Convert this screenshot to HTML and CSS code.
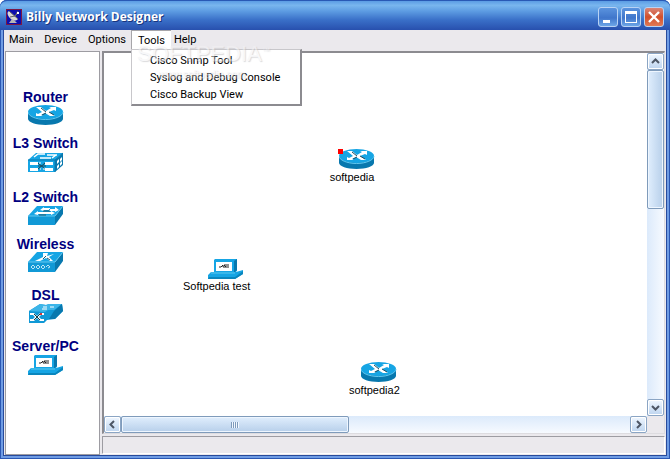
FILE: index.html
```html
<!DOCTYPE html>
<html lang="en">
<head>
    <meta charset="UTF-8">
    <meta name="viewport" content="width=device-width, initial-scale=1.0">
    <title>Billy Network Designer</title>
    <link rel="stylesheet" href="styles.css">
</head>
<body>

    <!-- device icons, used by the toolbox and the canvas -->
    <svg class="symbols" aria-hidden="true">
        <symbol id="router" viewBox="0 0 36 22">
            <path d="M0 7v7c0 3 8 6 17.500 6s17.500-3 17.500-6V7z" fill="#0878ae"/>
            <ellipse cx="17.500" cy="7" rx="17.500" ry="7" fill="#16a5e4"/>
            <path d="M0 7c0 4 8 7.500 17.500 7.500S35 11 35 7" fill="none" stroke="#62c8f0"/>
            <path d="M8 2h5l5 4 5-3-2-1h7v4l-2-1-5 2 6 4h-5l-5-3-4 2 2 1H8V8l2 1 4-2z" fill="#fff"/>
            <path d="M13 3l5 4M18 8l-4 2M21 7l5 3" stroke="#254d5d" fill="none"/>
        </symbol>
        <symbol id="l3switch" viewBox="0 0 36 22">
            <path d="M0 9l8-7h27l-8 7z" fill="#16a5e4"/>
            <path d="M27 9l8-7v12l-8 7z" fill="#0878ae"/>
            <path d="M0 9h27v12H0z" fill="#16a5e4"/>
            <path d="M0 9h27l8-7M27 9v12" stroke="#0878ae" fill="none"/>
            <path d="M6 6l4-3h7M19 4h10M12 7h11M24 7l4-3" stroke="#fff" stroke-width="1.500" fill="none"/>
            <path d="M2 11h8v3H2zM17 11h8v3h-8zM2 17h8v3H2zM17 17h8v3h-8zM29 10l2-2v3l-2 2zM32 8l2-2v3l-2 2zM29 15l2-2v3l-2 2zM32 12l2-2v3l-2 2z" fill="#fff"/>
            <path d="M10 12l7 6M17 12l-7 6M10 15h8" stroke="#174858"/>
            <path d="M11 12h2M15 18h2M12 18h1" stroke="#fff"/>
        </symbol>
        <symbol id="l2switch" viewBox="0 0 36 22">
            <path d="M0 11L9 1h26l-8 10z" fill="#16a5e4"/>
            <path d="M27 11l8-10v8l-8 11z" fill="#0878ae"/>
            <path d="M0 11h27v9H0z" fill="#1199d6"/>
            <path d="M0 11h27l8-10" stroke="#62c8f0" fill="none"/>
            <path d="M12 5l4-3v1h6v2h-6v1zM31 5l-4-3v2h-6v2h6v1zM6 9l4-3v1h7v2h-7v1zM27 8l-4-2v1h-6v2h6v1z" fill="#fff"/>
            <path d="M15 6h7M11 10h7" stroke="#245669"/>
        </symbol>
        <symbol id="wireless" viewBox="0 0 36 22">
            <path d="M0 10L9 0h26l-8 10z" fill="#16a5e4"/>
            <path d="M27 10l8-10v9l-8 11z" fill="#0878ae"/>
            <path d="M0 10h27v10H0z" fill="#1199d6"/>
            <path d="M0 10h27l8-10" stroke="#62c8f0" fill="none"/>
            <path d="M15 1l5 0-1 3 7-2-5 3 4 4h-3l-4-3-6 3H7l8-4z" fill="#fff"/>
            <path d="M18 4l-3 3M19 6l3 2" stroke="#245669"/>
            <path d="M3 15l2-2 2 2-2 2zM8 15l2-2 2 2-2 2zM13 15l2-2 2 2-2 2zM18 15l2-2 2 2-2 1" fill="none" stroke="#b9e4f5"/>
        </symbol>
        <symbol id="dsl" viewBox="0 0 36 22">
            <path d="M1 8L12 1l6 1 3-1h13l1 7-8 8-8 1-3 3H1z" fill="#1199d6"/>
            <path d="M1 8L12 1l6 1 3-1h13l-8 6h-6l-3 2z" fill="#3cb5e8"/>
            <path d="M26 8l8-7 1 7-8 8h-6z" fill="#0878ae"/>
            <path d="M15 4h4M22 4h4M14 6h5" stroke="#fff"/>
            <path d="M2 10h4l3 3 3-3h4v2h-3l-2 2 2 2h3v2h-4l-3-3-3 3H2v-2h3l2-2-2-2H2z" fill="#fff"/>
            <path d="M6 11l6 6M12 11l-6 6" stroke="#163d49"/>
            <path d="M12 10h2v2h-2z" fill="#d53838"/>
        </symbol>
        <symbol id="pc" viewBox="0 0 36 22">
            <path d="M6 2l1-1h22v12l-3 2H6z" fill="#16a5e4"/>
            <path d="M26 3l3-2v11l-3 3z" fill="#0878ae"/>
            <path d="M8 4h16v9H8z" fill="#fff"/>
            <path d="M3 14h25l7-2v4l-8 5H0v-4z" fill="#16a5e4"/>
            <path d="M1 19h26l8-6v3l-8 5H0z" fill="#0a86bd"/>
            <path d="M3 15h24" stroke="#5dcaf0"/>
            <path d="M11 9h2l2-2v2h3l-2-2h5M18 9h3" stroke="#222" fill="none"/>
        </symbol>
    </svg>

    <div class="window">
        <header class="titlebar">
            <svg class="app-icon" viewBox="0 0 16 16" aria-hidden="true">
                <path d="M0 0h16v16H0z" fill="#7a1745"/>
                <path d="M1 1h14v14H1z" fill="#0c0cae"/>
                <path d="M3 2l9 8c-3 3-7 1-9-2s-2-5 0-6z" fill="#d8d8d8"/>
                <path d="M3 2l9 8M4 8l5-1 3-5M9 7l4-4" stroke="#686868" fill="none"/>
                <path d="M6 10l-3 4h8l-3-3z" fill="#b6b6b6"/>
                <path d="M11 3h2v2h-2z" fill="#fff"/>
            </svg>
            <h1>Billy Network Designer</h1>
            <button class="win-btn" aria-label="Minimize">
                <svg viewBox="0 0 18 18"><path d="M4 12h7v3H4z" fill="#fff"/></svg>
            </button>
            <button class="win-btn" aria-label="Maximize">
                <svg viewBox="0 0 18 18"><path d="M3 3h12v12H3zM4 6v8h10V6z" fill="#fff" fill-rule="evenodd"/></svg>
            </button>
            <button class="win-btn close" aria-label="Close">
                <svg viewBox="0 0 18 18"><path d="M4 4l10 10M14 4L4 14" stroke="#fff" stroke-width="2.400"/></svg>
            </button>
        </header>

        <nav class="menubar">
            <button>Main</button>
            <button>Device</button>
            <button>Options</button>
            <div class="menu-holder">
                <button class="open" aria-expanded="true">Tools</button>
                <div class="dropdown">
                    <button>Cisco Snmp Tool</button>
                    <button>Syslog and Debug Console</button>
                    <button>Cisco Backup View</button>
                </div>
                <div class="watermark">
                    <span class="mark-name">SOFTPEDIA<sup>™</sup></span>
                    <span class="mark-url">www.softpedia.com</span>
                </div>
            </div>
            <button>Help</button>
        </nav>

        <main class="workspace">
            <aside class="toolbox">
                <button>Router<svg><use href="#router"/></svg></button>
                <button>L3 Switch<svg><use href="#l3switch"/></svg></button>
                <button>L2 Switch<svg><use href="#l2switch"/></svg></button>
                <button>Wireless<svg><use href="#wireless"/></svg></button>
                <button>DSL<svg><use href="#dsl"/></svg></button>
                <button>Server/PC<svg><use href="#pc"/></svg></button>
            </aside>

            <section class="editor">
                <div class="view">
                    <div class="canvas">
                        <div class="node node-router selected"><svg><use href="#router"/></svg>softpedia</div>
                        <div class="node node-pc"><svg><use href="#pc"/></svg>Softpedia test</div>
                        <div class="node node-router2"><svg><use href="#router"/></svg>softpedia2</div>
                    </div>
                    <div class="scroll vertical">
                        <button aria-label="Scroll up"><svg viewBox="0 0 9 9"><path d="M1 6l3.500-3.500L8 6"/></svg></button>
                        <div class="thumb"></div>
                        <div class="track"></div>
                        <button aria-label="Scroll down"><svg viewBox="0 0 9 9"><path d="M1 3l3.500 3.500L8 3"/></svg></button>
                    </div>
                    <div class="scroll horizontal">
                        <button aria-label="Scroll left"><svg viewBox="0 0 9 9"><path d="M6 1L2.500 4.500 6 8"/></svg></button>
                        <div class="thumb"><span class="grip"></span></div>
                        <div class="track"></div>
                        <button aria-label="Scroll right"><svg viewBox="0 0 9 9"><path d="M3 1l3.500 3.500L3 8"/></svg></button>
                    </div>
                </div>
                <footer class="status"></footer>
            </section>
        </main>
    </div>

</body>
</html>
```
FILE: styles.css
```css
* {
    box-sizing: border-box;
}

body {
    margin: 0;
    background: #fff;
    color: #000;
    font-family: "Liberation Sans", Arial, sans-serif;
    font-size: 11px;
}

button {
    margin: 0;
    padding: 0;
    border: 0;
    background: none;
    color: inherit;
    font: inherit;
}

.symbols {
    position: absolute;
    width: 0;
    height: 0;
}

.window {
    display: flex;
    flex-direction: column;
    height: 100vh;
    padding: 0 4px 4px;
    border-radius: 7px 7px 0 0;
    background: #4a7ad0;
    box-shadow: inset 0 0 0 1px #2b58b4, inset 0 0 0 3px #6f9ce4, inset 0 0 0 4px #284b9c;
}

/* title bar */
.titlebar {
    display: flex;
    align-items: center;
    gap: 2px;
    height: 30px;
    margin: 0 -4px;
    padding: 2px 6px 0;
    border-radius: 7px 7px 0 0;
    border-top: 1px solid #2959b5;
    background: linear-gradient(#5b9ce4, #79b6ee 15%, #5d9ce2 35%, #3a70c8 65%, #2850ae);
}

.app-icon {
    width: 16px;
    height: 16px;
    flex: none;
}

.titlebar h1 {
    flex: 1;
    margin: 0 0 0 2px;
    color: #fff;
    font-family: "Open Sans", sans-serif;
    font-size: 12px;
    font-weight: 700;
    text-shadow: 1px 1px 0 #17357e;
}

.win-btn {
    display: flex;
    align-items: center;
    justify-content: center;
    width: 20px;
    height: 20px;
    margin-left: 1px;
    border: 1px solid #b8d2f4;
    border-radius: 3px;
    background: linear-gradient(#5a93de, #4076cb 55%, #6da6e7);
}

.win-btn svg {
    width: 18px;
    height: 18px;
    flex: none;
}

.win-btn.close {
    background: linear-gradient(#d98578, #d14f2b 50%, #e27a55);
}

/* menus */
.menubar {
    display: flex;
    height: 20px;
    padding-left: 5px;
    background: #ebe9ed;
    font-family: Roboto, Tahoma, sans-serif;
}

.menubar > button {
    height: 18px;
    margin-right: 11px;
}

.menu-holder {
    position: relative;
    margin: 0 3px 0 -6px;
}

.menubar .open {
    height: 20px;
    padding: 0 6px;
    border: 1px solid #a7a6aa;
    border-width: 1px 0 0 1px;
    background: #fff;
}

.dropdown {
    position: absolute;
    z-index: 2;
    top: 19px;
    left: 0;
    width: 171px;
    padding: 2px 2px 1px;
    border: 1px solid #c8c7cb;
    border-right: 2px solid #8c8b90;
    border-bottom: 2px solid #8c8b90;
    background: #fff;
}

.dropdown button {
    display: block;
    width: 100%;
    height: 17px;
    padding-left: 16px;
    text-align: left;
    white-space: nowrap;
}

.watermark {
    position: absolute;
    z-index: 3;
    top: 8px;
    left: 6px;
    color: #f3f2f4;
    font-family: "Liberation Sans", Arial, sans-serif;
    text-shadow: 1px 1px 1px #b8b8bc;
    opacity: 0.5;
    pointer-events: none;
}

.mark-name {
    display: block;
    font-size: 22px;
    line-height: 26px;
    white-space: nowrap;
}

.mark-name sup {
    font-size: 8px;
}

.mark-url {
    display: block;
    padding-left: 22px;
    font-size: 10px;
    line-height: 16px;
}

/* toolbox and editor */
.workspace {
    display: flex;
    flex: 1;
    gap: 2px;
    min-height: 0;
    padding: 1px 1px 0;
    background: #ebe9ed;
}

.toolbox {
    display: grid;
    grid-template-rows: 46px 54px 47px 51px 51px auto;
    align-content: start;
    width: 95px;
    flex: none;
    padding-top: 37px;
    padding-right: 14px;
    border: 1px solid #9d9ca2;
    background: #fff;
    color: #000080;
    font-size: 14px;
    font-weight: 700;
}

.toolbox button {
    display: flex;
    flex-direction: column;
    align-items: center;
    line-height: 16px;
    white-space: nowrap;
}

.toolbox svg,
.node svg {
    width: 36px;
    height: 22px;
}

.editor {
    display: flex;
    flex: 1;
    flex-direction: column;
    gap: 2px;
    min-width: 0;
}

.view {
    display: grid;
    flex: 1;
    grid-template-columns: 1fr 17px;
    grid-template-rows: 1fr 17px;
    border: 1px solid #dddce0;
    border-top: 2px solid #8c8b90;
    border-left: 2px solid #8c8b90;
    min-height: 0;
}

.canvas {
    position: relative;
    background: #fff;
}

.node {
    position: absolute;
    display: flex;
    flex-direction: column;
    align-items: center;
    line-height: 13px;
    white-space: nowrap;
}

.node-router {
    left: 225px;
    top: 96px;
}

.node-pc {
    left: 79px;
    top: 205px;
}

.node-router2 {
    left: 245px;
    top: 309px;
}

.node svg {
    margin-left: 10px;
}

.node-pc svg {
    margin-left: 18px;
}

.selected::before {
    content: "";
    position: absolute;
    top: 0;
    left: 9px;
    width: 5px;
    height: 5px;
    background: #f00;
}

.scroll {
    display: flex;
}

.vertical {
    flex-direction: column;
    background: linear-gradient(90deg, #dceafb, #f6faff);
}

.horizontal {
    background: linear-gradient(#dceafb, #f6faff);
}

.scroll button {
    display: flex;
    align-items: center;
    justify-content: center;
    width: 17px;
    height: 17px;
    flex: none;
    border: 1px solid #8ba5c4;
    border-radius: 2px;
    background: linear-gradient(#f0f7ff, #bdd4ef);
    box-shadow: inset 0 0 0 1px #fff;
}

.scroll svg {
    width: 9px;
    height: 9px;
    fill: none;
    stroke: #4d5665;
    stroke-width: 2;
}

.thumb {
    display: flex;
    align-items: center;
    justify-content: center;
    flex: 138;
    border: 1px solid #7f9bbb;
    border-radius: 2px;
    box-shadow: inset 0 0 0 1px #eef6ff;
    background: linear-gradient(90deg, #e0eefd, #b7cfea);
}

.track {
    flex: 191;
}

.horizontal .thumb {
    flex: 227;
    background: linear-gradient(#e0eefd, #b7cfea);
}

.horizontal .track {
    flex: 282;
}

.grip {
    width: 8px;
    height: 6px;
    background: repeating-linear-gradient(90deg, #7f9bbb 0 1px, #f2f8ff 1px 2px);
}

.status {
    height: 18px;
    margin-bottom: 1px;
    border: 1px solid #fff;
    border-top-color: #9d9ca2;
    border-left-color: #9d9ca2;
}
```
